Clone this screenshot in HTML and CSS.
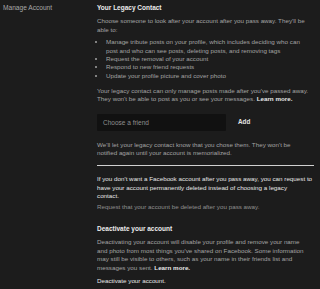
FILE: index.html
```html
<!DOCTYPE html>
<html>
<head>
<meta charset="utf-8">
<link rel="stylesheet" href="styles.css">
</head>
<body>
<div class="page">
  <div class="side">Manage Account</div>
  <div class="main">
    <h2 class="title">Your Legacy Contact</h2>
    <p class="text">Choose someone to look after your account after you pass away. They'll be<br>able to:</p>
    <ul class="list">
      <li>Manage tribute posts on your profile, which includes deciding who can<br>post and who can see posts, deleting posts, and removing tags</li>
      <li>Request the removal of your account</li>
      <li>Respond to new friend requests</li>
      <li>Update your profile picture and cover photo</li>
    </ul>
    <p class="text para2">Your legacy contact can only manage posts made after you've passed away.<br>They won't be able to post as you or see your messages. <span class="link">Learn more.</span></p>
    <div class="picker">
      <div class="input">Choose a friend</div>
      <div class="add">Add</div>
    </div>
    <p class="text para3">We'll let your legacy contact know that you chose them. They won't be<br>notified again until your account is memorialized.</p>
    <hr class="divider">
    <p class="strong">If you don't want a Facebook account after you pass away, you can request to<br>have your account permanently deleted instead of choosing a legacy<br>contact.</p>
    <p class="text request">Request that your account be deleted after you pass away.</p>
    <h2 class="title title2">Deactivate your account</h2>
    <p class="text">Deactivating your account will disable your profile and remove your name<br>and photo from most things you've shared on Facebook. Some information<br>may still be visible to others, such as your name in their friends list and<br>messages you sent. <span class="link">Learn more.</span></p>
    <p class="strong last">Deactivate your account.</p>
  </div>
</div>
</body>
</html>
```

FILE: styles.css
```css
html, body {
  margin: 0;
  padding: 0;
  background: #1c1c1c;
}
body {
  font-family: "Liberation Sans", Arial, sans-serif;
  font-size: 6.25px;
  line-height: 8.4px;
  color: #a3a3a3;
  width: 320px;
  height: 289px;
  overflow: hidden;
}
.page {
  display: flex;
  padding-top: 4px;
}
.side {
  width: 94px;
  padding-left: 3px;
  font-size: 6.6px;
  color: #a8a8a8;
}
.main {
  width: 222px;
}
.title {
  margin: 0;
  font-size: 6.5px;
  font-weight: bold;
  color: #ececec;
  line-height: 8.4px;
}
.text {
  margin: 0;
}
.title + .text {
  margin-top: 5px;
}
.list {
  margin: 4px 0 0 0;
  padding: 0 0 0 9px;
}
.list li {
  margin: 0;
}
.para2 {
  margin-top: 6.5px;
}
.link {
  color: #e8e8e8;
  font-weight: bold;
}
.picker {
  display: flex;
  align-items: center;
  margin-top: 10px;
}
.input {
  width: 123px;
  height: 17px;
  line-height: 17px;
  padding-left: 6px;
  background: #111111;
  color: #8f8f8f;
  font-size: 6.5px;
  border-radius: 1px;
}
.add {
  margin-left: 12px;
  color: #e6e6e6;
  font-weight: bold;
  font-size: 6.3px;
}
.para3 {
  margin-top: 10px;
}
.divider {
  margin: 8px 5px 0 0;
  border: 0;
  height: 1px;
  background: #d0d0d0;
}
.strong {
  margin: 9px 0 0 0;
  color: #e6e6e6;
}
.request {
  margin-top: 2px;
  color: #8f8f8f;
}
.title2 {
  margin-top: 14px;
}
.last {
  margin-top: 5px;
}
```
